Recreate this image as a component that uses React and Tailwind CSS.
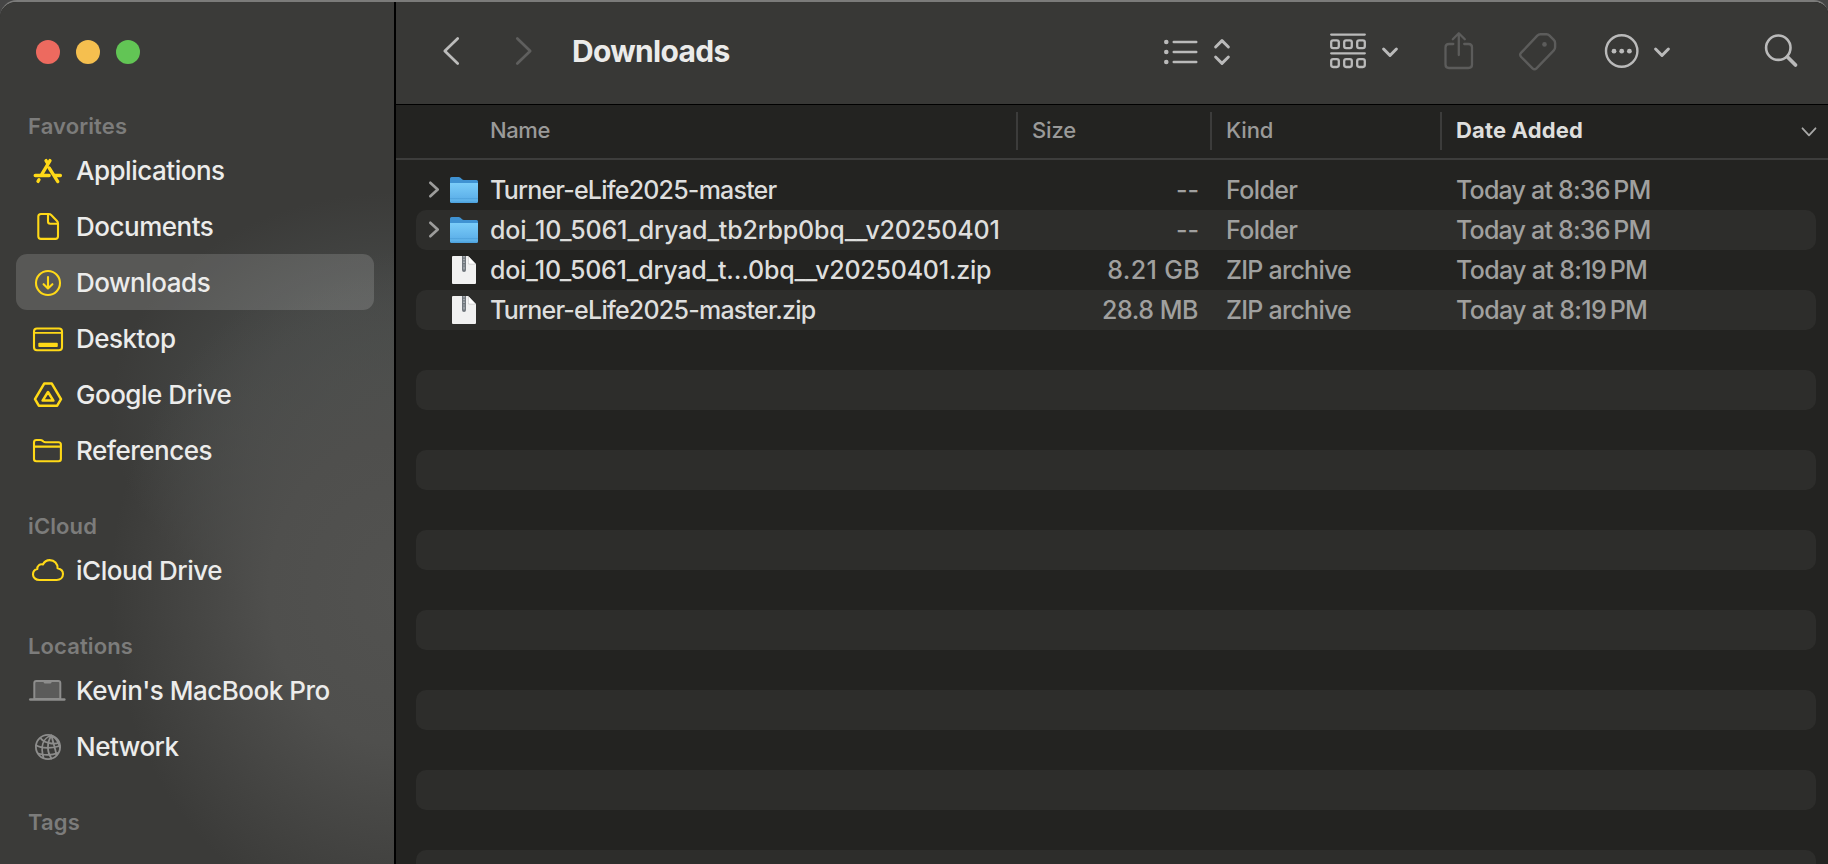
import React from 'react';

const paths = {
  applications: (
    <g strokeWidth="3.3">
      <path d="M22 10.6 13.6 24.6M18 10.6l2 3.4M21.2 18l8.6 13.6M7.2 25.5h14M27 25.5h5.4M11 29.7l-1 1.7" />
    </g>
  ),
  document: (
    <path d="M13 8h7.8q1.4 0 2.4 1l5.8 6q1 1 1 2.4V30.3q0 2.6-2.6 2.6H13q-2.7 0-2.7-2.6V10.6Q10.3 8 13 8zM20 8.4v7.2q0 2.2 2.2 2.2h7.4" />
  ),
  downloads: (
    <>
      <circle cx="20" cy="21" r="12" />
      <path d="M20 15v11.4M15.6 22.2l4.4 4.4 4.4-4.4" />
    </>
  ),
  desktop: (
    <>
      <rect x="6" y="10.5" width="28" height="21.7" rx="3" />
      <path d="M6.5 14.8h27" strokeWidth="1.8" />
      <rect x="10.3" y="24.7" width="19.5" height="4.3" rx="1" fill="currentColor" stroke="none" />
    </>
  ),
  drive: (
    <g strokeWidth="2.5">
      <path d="M16.2 9.6h7.6L33 25.2l-3.8 6.5H10.8L7 25.2z" />
      <path d="m20 18 5.4 8.6H14.6z" />
    </g>
  ),
  folder: (
    <path d="M6 29V12.4Q6 10 8.5 10h3.8q1.4 0 2.4.9l.7.6q.9.7 2.2.7h12.8q2.5 0 2.5 2.5V29q0 2.2-2.3 2.2H8.4Q6 31.2 6 29zM6.3 16.6h26.3" />
  ),
  cloud: (
    <path d="M11.4 30C7.7 30 5 27.6 5 24.4c0-2.6 1.8-4.7 4.3-5.3-.2-3.2 2.5-5.4 5.6-4.6 1.3-2.7 3.8-4.4 6.9-4.4 4.7 0 7.9 3.6 7.8 8.2 3 .6 5.4 2.7 5.4 5.8 0 3.3-2.6 5.9-6.3 5.9z" />
  ),
  laptop: (
    <>
      <path d="M6.3 29V13q0-2 2-2h22q2 0 2 2v16z" fill="#5b5b5a" strokeWidth="2" />
      <path d="M2.3 29.5h34" strokeWidth="2.6" />
      <path d="M17 12.2h5.2" strokeWidth="2.4" />
    </>
  ),
  globe: (
    <g strokeWidth="1.8">
      <circle cx="20" cy="21" r="12.1" />
      <path d="M23.5 9.5C14.5 12 12.5 21 15.5 32M23.5 9.5C18.5 17 19 26 23.5 32.5M23.5 9.5c1.5 7 3.5 12 5 19.5M23.5 9.5c4 2.5 7.5 7 8.3 12M12.5 11.8C14.5 16 26 19.5 31.2 16.5M8 19.3c5 3.2 17.5 3.4 24 .5M10 27.5c5.5 2 14 2 19.5-.5" />
    </g>
  ),
};

function SideIcon({ name, muted }) {
  return (
    <svg
      width="40"
      height="40"
      viewBox="0 0 40 40"
      fill="none"
      stroke="currentColor"
      strokeWidth="2.1"
      strokeLinecap="round"
      strokeLinejoin="round"
      className={muted ? 'shrink-0 text-[#8d8d8c]' : 'shrink-0 text-[#ffd917]'}
    >
      {paths[name]}
    </svg>
  );
}

function Section({ title, first, children }) {
  return (
    <section>
      <h2
        className={
          (first ? 'h-[40px] ' : 'h-[64px] ') +
          'flex items-end pb-1 pl-[28px] text-[22px] leading-6 font-semibold tracking-[0.12px] text-[#7c7c7b]'
        }
      >
        {title}
      </h2>
      <ul>{children}</ul>
    </section>
  );
}

function Item({ icon, label, active, muted }) {
  return (
    <li
      className={
        'mr-5 ml-4 flex h-14 items-center gap-2 rounded-[11px] pl-3 text-[26px] leading-8 font-medium tracking-[-0.49px] text-[#ececeb] ' +
        (active ? 'bg-white/15' : '')
      }
    >
      <SideIcon name={icon} muted={muted} />
      <span className="pt-0.5 whitespace-nowrap">{label}</span>
    </li>
  );
}

function Tool({ width, className, children, strokeWidth = 2.4 }) {
  return (
    <svg
      width={width}
      height="40"
      viewBox={`0 0 ${width} 40`}
      fill="none"
      stroke="currentColor"
      strokeWidth={strokeWidth}
      strokeLinecap="round"
      strokeLinejoin="round"
      className={'shrink-0 ' + (className || '')}
    >
      {children}
    </svg>
  );
}

function Toolbar() {
  return (
    <header className="flex h-[102px] shrink-0 items-start bg-[#383836] pt-[29px] pr-7 pl-11 text-[#bababa]">
      <Tool width={24} className="text-[#bcbcbb]" strokeWidth={2.7}>
        <path d="M17.7 7.5 4.8 20l12.9 12.5" />
      </Tool>
      <Tool width={24} className="ml-12 text-[#5f5f5e]" strokeWidth={2.7}>
        <path d="M5.3 7.5 18.2 20 5.3 32.5" />
      </Tool>
      <h1 className="ml-9 text-[30px] leading-10 font-bold tracking-[-0.68px] text-[#ebebea]">Downloads</h1>
      <div className="ml-auto flex">
        <Tool width={40}>
          <g fill="currentColor" stroke="none">
            <circle cx="6.3" cy="11" r="2.3" />
            <circle cx="6.3" cy="21" r="2.3" />
            <circle cx="6.3" cy="31" r="2.3" />
          </g>
          <path d="M13.7 11h22.6M13.7 21h22.6M13.7 31h22.6" />
        </Tool>
        <Tool width={24} className="ml-2.5" strokeWidth={2.9}>
          <path d="M5.6 16 12 9.6l6.4 6.4M5.6 26l6.4 6.4 6.4-6.4" />
        </Tool>
        <Tool width={40} className="ml-[94px]" strokeWidth={2.3}>
          <path d="M3.2 3.6h33.6M3.2 22.3h33.6" />
          <rect x="3.2" y="9.4" width="7.6" height="7.8" rx="1.9" />
          <rect x="16.2" y="9.4" width="7.6" height="7.8" rx="1.9" />
          <rect x="29.2" y="9.4" width="7.6" height="7.8" rx="1.9" />
          <rect x="3.2" y="28.2" width="7.6" height="7.8" rx="1.9" />
          <rect x="16.2" y="28.2" width="7.6" height="7.8" rx="1.9" />
          <rect x="29.2" y="28.2" width="7.6" height="7.8" rx="1.9" />
        </Tool>
        <Tool width={24} className="ml-2.5" strokeWidth={3}>
          <path d="m5.6 18 6.4 6.5 6.4-6.5" />
        </Tool>
        <Tool width={36} className="ml-[38px] text-[#5c5c5b]" strokeWidth={2.3}>
          <path d="M13.3 13H9q-3.5 0-3.5 3.5v17Q5.5 37 9 37h19.5q3.5 0 3.5-3.5v-17q0-3.5-3.5-3.5h-4.3M18.8 24V2.5M12.8 8.2l6-6 6 6" />
        </Tool>
        <Tool width={42} className="ml-10 text-[#5c5c5b]" strokeWidth={2.4}>
          <path d="M24.5 3.3h6q1.8 0 3.1 1.3l4.2 4.2q1.3 1.3 1.3 3.1v4.4q0 1.8-1.3 3.1L20.5 37.3q-2 2-4 0L5.2 26q-2.2-2.2 0-4.3L21.3 4.7q1.3-1.4 3.2-1.4z" />
          <circle cx="28.5" cy="13.4" r="2.3" fill="currentColor" stroke="none" />
        </Tool>
        <Tool width={38} className="ml-[45px]" strokeWidth={2.4}>
          <circle cx="18.7" cy="20" r="15.7" />
          <g fill="currentColor" stroke="none">
            <circle cx="11" cy="20.2" r="2.4" />
            <circle cx="18.7" cy="20.2" r="2.4" />
            <circle cx="26.4" cy="20.2" r="2.4" />
          </g>
        </Tool>
        <Tool width={24} className="ml-[9px]" strokeWidth={3}>
          <path d="m5.6 18 6.4 6.5 6.4-6.5" />
        </Tool>
        <Tool width={38} className="ml-[88px]" strokeWidth={2.6}>
          <circle cx="16.3" cy="16.7" r="12.2" />
          <path d="m25.5 26 8 8" strokeWidth="3.8" />
        </Tool>
      </div>
    </header>
  );
}

function ColumnHeader() {
  const cell = 'flex h-[38px] items-center border-l-2 border-[#3c3c3b] pb-0.5 pl-[14px] tracking-[-0.15px]';
  return (
    <div className="grid h-14 shrink-0 grid-cols-[620px_194px_230px_1fr] border-t border-b-2 border-t-black border-b-[#3d3d3c] pt-[7px] text-[22px] leading-7 font-medium text-[#9a9a99]">
      <span className="flex h-[38px] items-center pb-0.5 pl-[94px] tracking-[-0.4px]">Name</span>
      <span className={cell}>Size</span>
      <span className={cell}>Kind</span>
      <span className={cell + ' font-bold text-[#dededd]'}>
        <span className="tracking-[0.15px]">Date Added</span>
        <svg
          width="20"
          height="16"
          viewBox="0 0 20 16"
          fill="none"
          stroke="#a8a8a7"
          strokeWidth="1.8"
          strokeLinecap="round"
          strokeLinejoin="round"
          className="mt-0.5 mr-[9px] ml-auto"
        >
          <path d="m3.5 5.3 6.5 7 6.5-7" />
        </svg>
      </span>
    </div>
  );
}

function FolderIcon() {
  return (
    <svg width="28" height="40" viewBox="0 0 28 40" className="shrink-0">
      <defs>
        <linearGradient id="folderFront" x1="0" y1="0" x2="0" y2="1">
          <stop offset="0" stopColor="#7bcdf9" />
          <stop offset="0.75" stopColor="#5fb2ea" />
          <stop offset="0.76" stopColor="#4fa2dc" />
          <stop offset="0.85" stopColor="#62b6ec" />
          <stop offset="1" stopColor="#4a9fdc" />
        </linearGradient>
      </defs>
      <path d="M0 32V8.500Q0 7 1.500 7h7q1.200 0 2 .8l1.300 1.300q.9.900 2.200.9H26.500Q28 10 28 11.500V32z" fill="#3f92d2" />
      <path d="M0 13h28v18.500q0 1.500-1.500 1.500h-25Q0 33 0 31.500z" fill="url(#folderFront)" />
    </svg>
  );
}

function ZipIcon() {
  return (
    <svg width="28" height="40" viewBox="0 0 28 40" className="shrink-0">
      <path d="M3 6h15l8 8v19q0 1-1 1H3q-1 0-1-1V7q0-1 1-1z" fill="#f1f1f1" />
      <path d="M18 6v7q0 1.500 1.500 1.500H26z" fill="#c9c9c9" />
      <path d="M18.600 6.600v6q0 1.200 1.200 1.200h5.400z" fill="#ffffff" />
      <path d="M12 6h4v14q0 2-2 2t-2-2z" fill="#70767c" />
      <path d="M14 6v9.500" stroke="#c6ccd2" strokeWidth="1.2" strokeDasharray="1.4 1.4" />
      <path d="M14 16.500v3" stroke="#aab0b6" strokeWidth="1.4" />
    </svg>
  );
}

const files = [
  {
    name: 'Turner-eLife2025-master',
    nameClass: 'tracking-[-0.79px]',
    size: '--',
    sizeClass: 'pr-[11px]',
    kind: 'Folder',
    kindClass: 'tracking-[-0.6px]',
    date: 'Today at 8:36\u2009PM',
    dateClass: 'tracking-[-0.79px]',
    folder: true,
  },
  {
    name: 'doi_10_5061_dryad_tb2rbp0bq__v20250401',
    nameClass: 'tracking-[-0.18px]',
    size: '--',
    sizeClass: 'pr-[11px]',
    kind: 'Folder',
    kindClass: 'tracking-[-0.6px]',
    date: 'Today at 8:36\u2009PM',
    dateClass: 'tracking-[-0.79px]',
    folder: true,
  },
  {
    name: 'doi_10_5061_dryad_t…0bq__v20250401.zip',
    nameClass: 'tracking-[-0.23px]',
    size: '8.21 GB',
    sizeClass: 'pr-[10px] tracking-[0.35px]',
    kind: 'ZIP archive',
    kindClass: 'tracking-[-0.75px]',
    date: 'Today at 8:19\u2009PM',
    dateClass: 'tracking-[-0.66px]',
  },
  {
    name: 'Turner-eLife2025-master.zip',
    nameClass: 'tracking-[-0.77px]',
    size: '28.8 MB',
    sizeClass: 'pr-3 tracking-[-0.45px]',
    kind: 'ZIP archive',
    kindClass: 'tracking-[-0.75px]',
    date: 'Today at 8:19\u2009PM',
    dateClass: 'tracking-[-0.66px]',
  },
];

function FileRow({ file, striped }) {
  return (
    <div
      className={
        'mr-3 ml-5 grid h-10 shrink-0 grid-cols-[600px_194px_230px_1fr] items-center rounded-[10px] text-[25px] leading-[30px] font-[450] text-[#a0a09f] ' +
        (striped ? 'bg-[#2d2d2b]' : '')
      }
    >
      {file && (
        <>
          <div className="flex items-center">
            <svg
              width="34"
              height="40"
              viewBox="0 0 34 40"
              fill="none"
              stroke="#9c9c9b"
              strokeWidth="2.7"
              strokeLinecap="round"
              strokeLinejoin="round"
              className="shrink-0"
            >
              {file.folder && <path d="m14.300 12.800 7.400 6.700-7.400 6.700" />}
            </svg>
            {file.folder ? <FolderIcon /> : <ZipIcon />}
            <span className={'ml-3 pb-px whitespace-nowrap text-[#dededd] ' + file.nameClass}>{file.name}</span>
          </div>
          <span className={'pb-px text-right whitespace-nowrap ' + file.sizeClass}>{file.size}</span>
          <span className={'pb-px pl-4 ' + file.kindClass}>{file.kind}</span>
          <span className={'pb-px pl-4 whitespace-nowrap ' + file.dateClass}>{file.date}</span>
        </>
      )}
    </div>
  );
}

export default function App() {
  const rows = Array.from({ length: 18 }, (_, i) => files[i] || null);
  return (
    <div className="h-[864px] w-[1828px] overflow-hidden bg-[#454545] font-['Inter','Liberation_Sans',sans-serif]">
      <div className="flex h-full overflow-hidden rounded-tl-[17px] rounded-tr-[14px] border-t-2 border-[#7b7b7a] bg-[#232321]">
        <aside className="flex w-[396px] shrink-0 flex-col border-r-2 border-black bg-[#3b3b39] bg-[radial-gradient(ellipse_290px_340px_at_400px_590px,#525250_0%,#4f4f4d_45%,#3b3b3900_100%),radial-gradient(ellipse_290px_220px_at_400px_410px,#4b504e_0%,#4b4e4dbb_50%,#3b3b3900_100%)]">
          <div className="flex h-[100px] shrink-0 gap-4 pt-[38px] pl-9">
            <i className="size-6 rounded-full bg-[#ed6a5f]" />
            <i className="size-6 rounded-full bg-[#f5bf4f]" />
            <i className="size-6 rounded-full bg-[#62c555]" />
          </div>
          <Section title="Favorites" first>
            <Item icon="applications" label="Applications" />
            <Item icon="document" label="Documents" />
            <Item icon="downloads" label="Downloads" active />
            <Item icon="desktop" label="Desktop" />
            <Item icon="drive" label="Google Drive" />
            <Item icon="folder" label="References" />
          </Section>
          <Section title="iCloud">
            <Item icon="cloud" label="iCloud Drive" />
          </Section>
          <Section title="Locations">
            <Item icon="laptop" label="Kevin's MacBook Pro" muted />
            <Item icon="globe" label="Network" muted />
          </Section>
          <Section title="Tags" />
        </aside>
        <main className="flex min-w-0 flex-1 flex-col overflow-hidden bg-[#232321]">
          <Toolbar />
          <ColumnHeader />
          <div className="flex flex-col pt-2.5">
            {rows.map((file, i) => (
              <FileRow key={i} file={file} striped={i % 2 === 1} />
            ))}
          </div>
        </main>
      </div>
    </div>
  );
}
